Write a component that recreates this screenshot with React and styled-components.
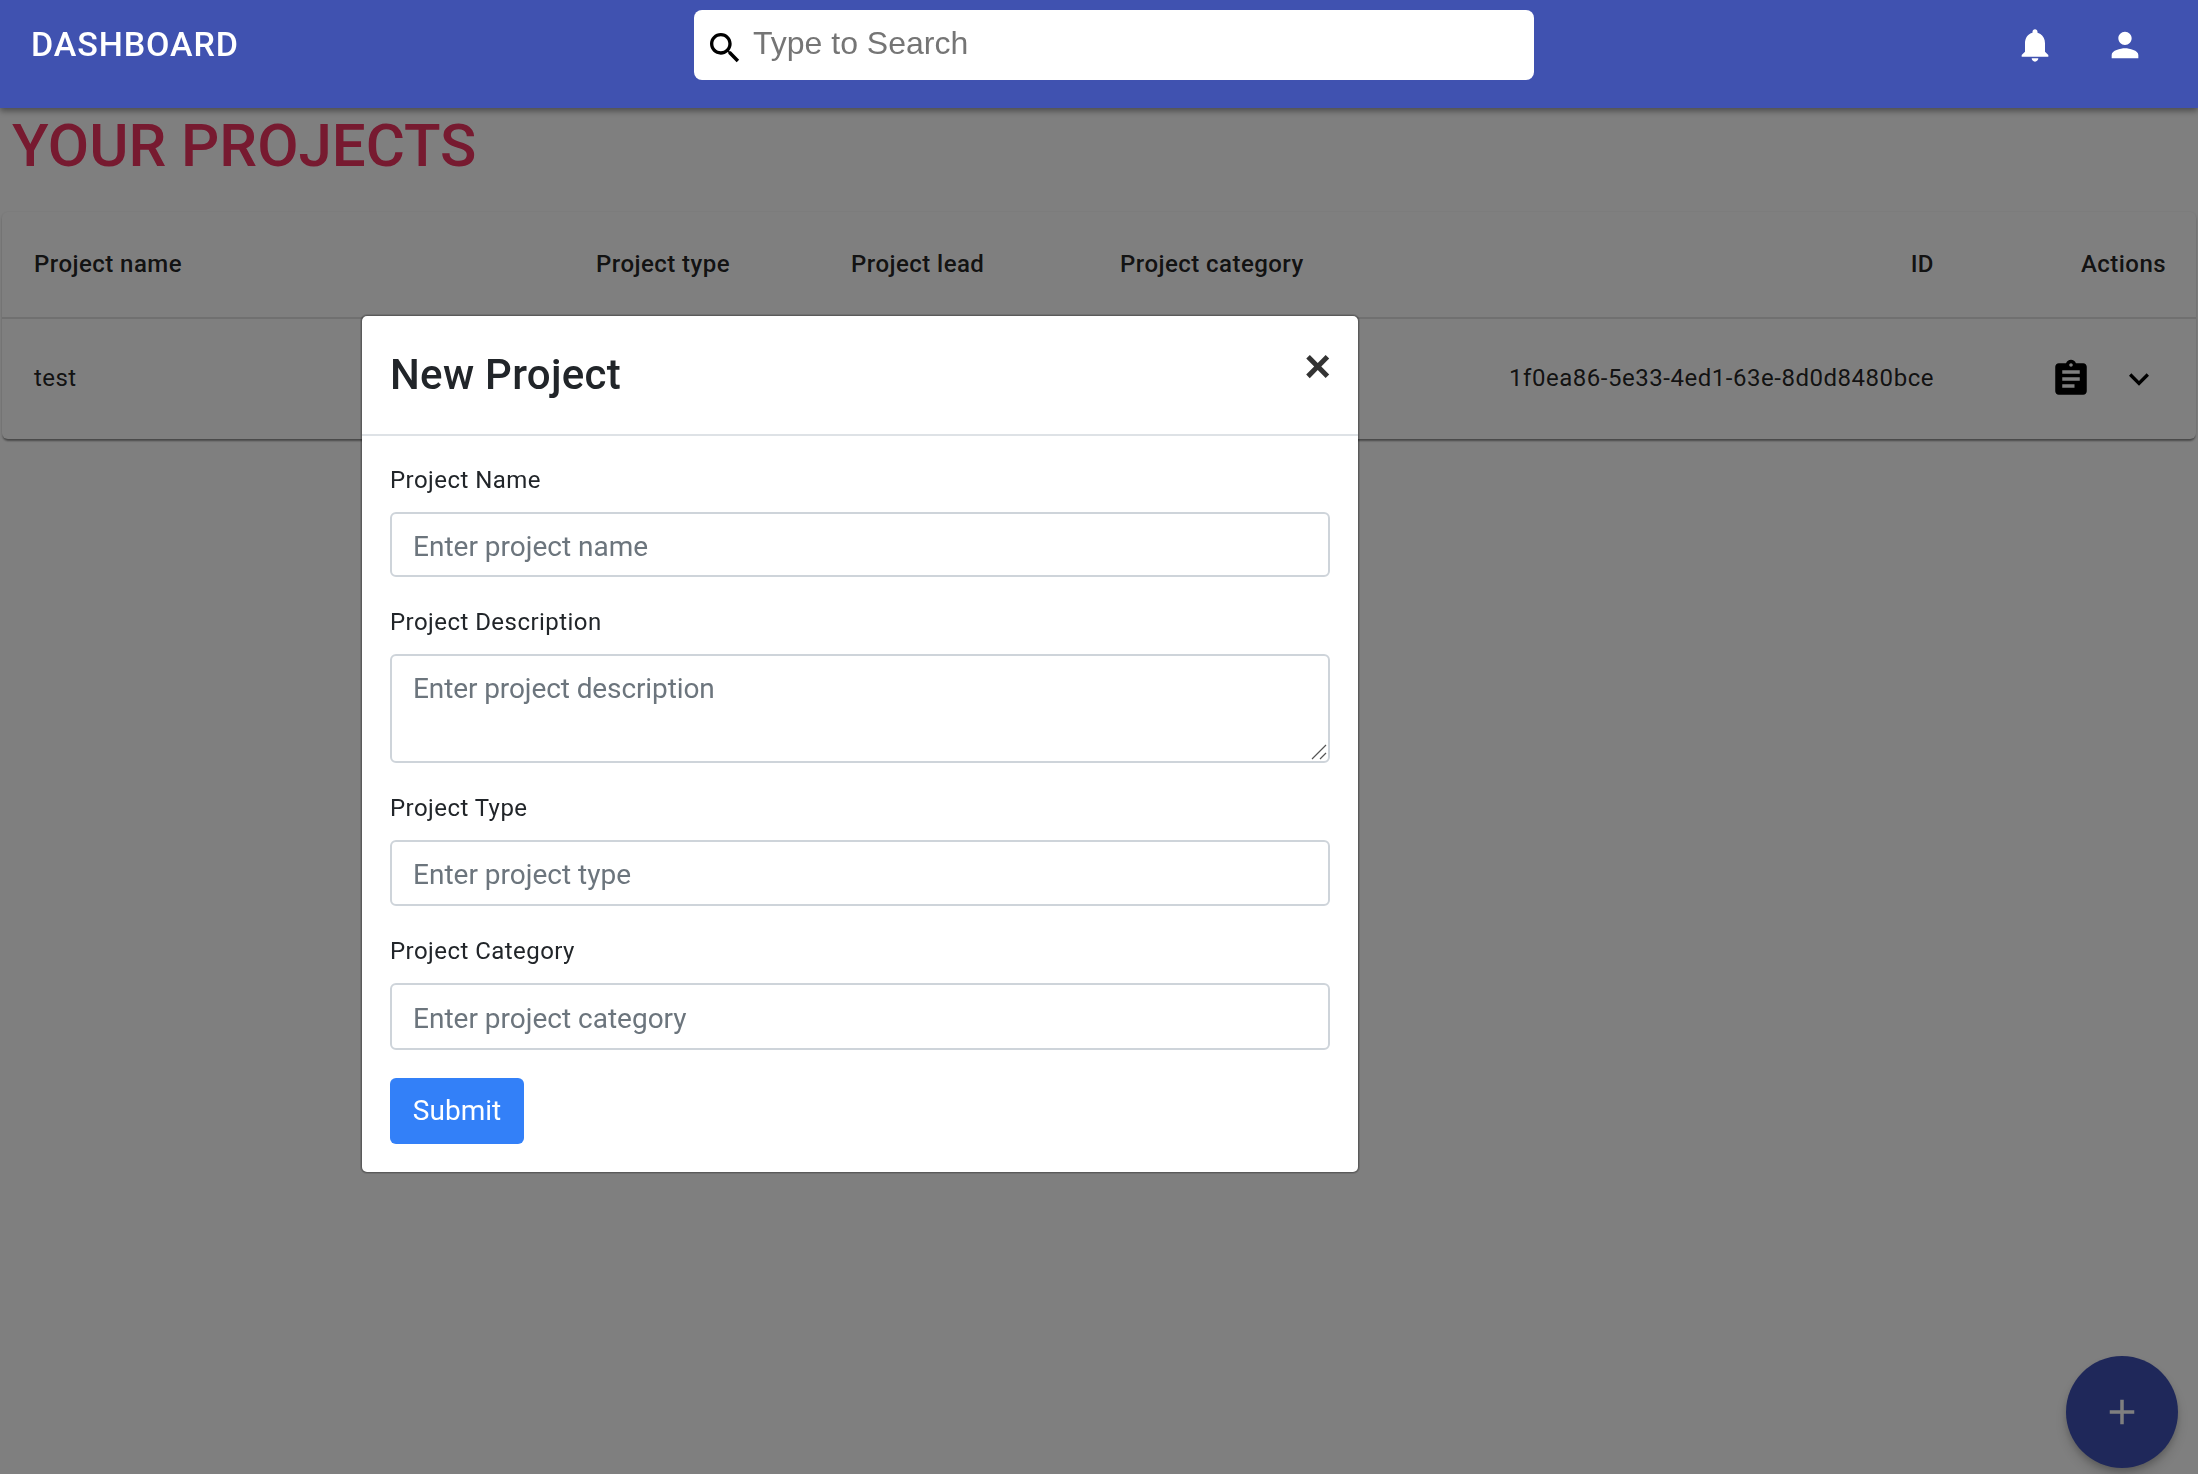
import React from "react";
import styled, { createGlobalStyle } from "styled-components";

const GlobalStyle = createGlobalStyle`
  html, body {
    margin: 0;
    height: 100%;
    overflow: hidden;
    background: #fff;
    font-family: Roboto, "Liberation Sans", sans-serif;
  }
  * {
    box-sizing: border-box;
  }
`;

const ICONS = {
  search:
    "M15.5 14h-.79l-.28-.27C15.41 12.59 16 11.11 16 9.5 16 5.91 13.09 3 9.5 3S3 5.91 3 9.5 5.91 16 9.5 16c1.61 0 3.09-.59 4.23-1.57l.27.28v.79l5 4.99L20.49 19l-4.99-5zm-6 0C7.01 14 5 11.99 5 9.5S7.01 5 9.5 5 14 7.01 14 9.5 11.99 14 9.5 14z",
  bell: "M12 22c1.1 0 2-.9 2-2h-4c0 1.1.89 2 2 2zm6-6v-5c0-3.07-1.64-5.64-4.5-6.32V4c0-.83-.67-1.5-1.5-1.5s-1.5.67-1.5 1.5v.68C7.63 5.36 6 7.92 6 11v5l-2 2v1h16v-1l-2-2z",
  person:
    "M12 12c2.21 0 4-1.79 4-4s-1.79-4-4-4-4 1.79-4 4 1.79 4 4 4zm0 2c-2.67 0-8 1.34-8 4v2h16v-2c0-2.66-5.33-4-8-4z",
  assignment:
    "M19 3h-4.18C14.4 1.84 13.3 1 12 1c-1.3 0-2.4.84-2.82 2H5c-1.1 0-2 .9-2 2v14c0 1.1.9 2 2 2h14c1.1 0 2-.9 2-2V5c0-1.1-.9-2-2-2zm-7 0c.55 0 1 .45 1 1s-.45 1-1 1-1-.45-1-1 .45-1 1-1zm2 14H7v-2h7v2zm3-4H7v-2h10v2zm0-4H7V7h10v2z",
  expand: "M16.59 8.59L12 13.17 7.41 8.59 6 10l6 6 6-6z",
  add: "M19 13h-6v6h-2v-6H5v-2h6V5h2v6h6v2z",
};

const Icon = ({ name, size, color }) => (
  <svg width={size} height={size} viewBox="0 0 24 24" fill={color}>
    <path d={ICONS[name]} />
  </svg>
);

const FIELDS = [
  { label: "Project Name", placeholder: "Enter project name", height: 65 },
  { label: "Project Description", placeholder: "Enter project description", height: 109, multiline: true },
  { label: "Project Type", placeholder: "Enter project type", height: 66 },
  { label: "Project Category", placeholder: "Enter project category", height: 67 },
];

const App = () => {
  return (
    <>
      <GlobalStyle />
      <TopBar>
        <Brand>DASHBOARD</Brand>
        <SearchBox>
          <SearchIcon>
            <Icon name="search" size={40} color="#000" />
          </SearchIcon>
          <SearchInput placeholder="Type to Search" />
        </SearchBox>
        <TopIcons>
          <Icon name="bell" size={40} color="#fff" />
          <Icon name="person" size={40} color="#fff" />
        </TopIcons>
      </TopBar>

      <PageTitle>YOUR PROJECTS</PageTitle>

      <Card>
        <HeadRow>
          <span>Project name</span>
          <span>Project type</span>
          <span>Project lead</span>
          <span>Project category</span>
          <EndCell>ID</EndCell>
          <EndCell>Actions</EndCell>
        </HeadRow>
        <BodyRow>
          <span>test</span>
          <span />
          <span />
          <span />
          <IdCell>1f0ea86-5e33-4ed1-63e-8d0d8480bce</IdCell>
          <ActionsCell>
            <Icon name="assignment" size={42} color="#000" />
            <Icon name="expand" size={40} color="#000" />
          </ActionsCell>
        </BodyRow>
      </Card>

      <Fab>
        <Icon name="add" size={42} color="#fff" />
      </Fab>

      <Backdrop>
        <Modal>
          <ModalHeader>
            <ModalTitle>New Project</ModalTitle>
            <CloseButton>×</CloseButton>
          </ModalHeader>
          <ModalForm onSubmit={(ev) => ev.preventDefault()}>
            {FIELDS.map((field) => (
              <Group key={field.label}>
                <Label>{field.label}</Label>
                {field.multiline ? (
                  <TextAreaWrap>
                    <TextArea placeholder={field.placeholder} $height={field.height} />
                    <ResizeGrip width="16" height="16" viewBox="0 0 16 16">
                      <path d="M1 15L15 1M9 15L15 9" stroke="#555" strokeWidth="1.2" fill="none" />
                    </ResizeGrip>
                  </TextAreaWrap>
                ) : (
                  <TextInput placeholder={field.placeholder} $height={field.height} />
                )}
              </Group>
            ))}
            <SubmitButton type="submit">Submit</SubmitButton>
          </ModalForm>
        </Modal>
      </Backdrop>
    </>
  );
};

const TopBar = styled.header`
  position: relative;
  z-index: 20;
  height: 108px;
  background: #4052b0;
  box-shadow: 0 3px 6px rgba(0, 0, 0, 0.4);
  color: #fff;
  display: grid;
  grid-template-columns: 694px 840px 1fr;
  align-items: start;
`;
const Brand = styled.h1`
  margin: 0;
  padding: 27px 0 0 31px;
  font-size: 34px;
  line-height: 34px;
  letter-spacing: 0.9px;
  font-weight: 500;
`;
const SearchBox = styled.div`
  margin-top: 10px;
  height: 70px;
  background: #fff;
  border-radius: 8px;
  display: flex;
  align-items: center;
`;
const SearchIcon = styled.div`
  display: flex;
  margin: 6px 8px 0 11px;
`;
const SearchInput = styled.input`
  flex: 1;
  border: none;
  outline: none;
  padding: 0 0 3px;
  height: 44px;
  background: transparent;
  font-family: "Liberation Sans", Arial, sans-serif;
  font-size: 32px;
  color: #333;

  &::placeholder {
    color: #757575;
    opacity: 1;
  }
`;
const TopIcons = styled.div`
  display: flex;
  justify-content: flex-end;
  gap: 50px;
  padding: 25px 53px 0 0;
`;
const PageTitle = styled.h2`
  margin: 0;
  padding: 3px 0 0 12px;
  height: 104px;
  font-size: 60px;
  line-height: 70px;
  font-weight: 500;
  color: #ee3460;
`;
const Card = styled.section`
  margin: 0 2px;
  background: #fff;
  border-radius: 6px;
  box-shadow: 0 3px 2px -1px rgba(0, 0, 0, 0.35), 0 1px 3px 0 rgba(0, 0, 0, 0.2);
`;
const HeadRow = styled.div`
  display: grid;
  grid-template-columns: 562px 255px 269px 380px 1fr 232px;
  align-items: center;
  height: 107px;
  padding: 0 30px 2px 32px;
  border-bottom: 2px solid #e0e0e0;
  font-size: 24px;
  letter-spacing: 0.45px;
  font-weight: 500;
  color: rgba(0, 0, 0, 0.87);
  white-space: nowrap;
`;
const BodyRow = styled.div`
  display: grid;
  grid-template-columns: 562px 255px 269px 380px 1fr 232px;
  align-items: center;
  height: 120px;
  padding: 0 30px 2px 32px;
  font-size: 24px;
  letter-spacing: 0.45px;
  color: rgba(0, 0, 0, 0.87);
  white-space: nowrap;
`;
const EndCell = styled.span`
  text-align: right;
`;
const IdCell = styled(EndCell)`
  letter-spacing: 0.53px;
`;
const ActionsCell = styled.div`
  display: flex;
  justify-content: flex-end;
  align-items: center;
  gap: 27px;
  padding: 2px 7px 0 0;
`;
const Fab = styled.button`
  position: fixed;
  right: 20px;
  bottom: 6px;
  width: 112px;
  height: 112px;
  padding: 0;
  border: none;
  border-radius: 50%;
  background: #3f51b5;
  display: flex;
  align-items: center;
  justify-content: center;
  box-shadow: 0 4px 7px -1px rgba(0, 0, 0, 0.2), 0 8px 14px 0 rgba(0, 0, 0, 0.14);
`;
const Backdrop = styled.div`
  position: fixed;
  inset: 0;
  z-index: 10;
  background: rgba(0, 0, 0, 0.5);
  padding: 315px 0 0 361px;
`;
const Modal = styled.div`
  width: 998px;
  background: #fff;
  border: 1px solid rgba(0, 0, 0, 0.2);
  background-clip: padding-box;
  border-radius: 6px;
  box-shadow: 0 0 0 1px rgba(0, 0, 0, 0.12);
`;
const ModalHeader = styled.div`
  height: 120px;
  padding: 0 28px;
  border-bottom: 2px solid #dee2e6;
  display: flex;
  justify-content: space-between;
  align-items: center;
`;
const ModalTitle = styled.h3`
  margin: 0;
  font-size: 42px;
  line-height: 60px;
  letter-spacing: 0.3px;
  font-weight: 500;
  color: #212529;
`;
const CloseButton = styled.button`
  margin: -18px -1px 0 0;
  padding: 0;
  border: none;
  background: none;
  font-family: "Liberation Sans", Arial, sans-serif;
  font-size: 46px;
  line-height: 46px;
  font-weight: 700;
  color: #333;
`;
const ModalForm = styled.form`
  padding: 27px 28px 28px;
`;
const Group = styled.div`
  margin-bottom: 28px;
`;
const Label = styled.label`
  display: block;
  height: 49px;
  font-size: 24px;
  line-height: 34px;
  letter-spacing: 0.45px;
  color: #212529;
`;
const TextInput = styled.input`
  display: block;
  width: 100%;
  height: ${(p) => p.$height}px;
  padding: 3px 22px 0 21px;
  border: 2px solid #ced4da;
  border-radius: 6px;
  outline: none;
  font-family: Roboto, sans-serif;
  font-size: 28px;
  color: #495057;

  &::placeholder {
    color: #6c757d;
    opacity: 1;
  }
`;
const TextAreaWrap = styled.div`
  position: relative;
`;
const TextArea = styled.textarea`
  display: block;
  width: 100%;
  height: ${(p) => p.$height}px;
  padding: 12px 22px 8px 21px;
  border: 2px solid #ced4da;
  border-radius: 6px;
  outline: none;
  resize: none;
  font-family: Roboto, sans-serif;
  font-size: 28px;
  line-height: 42px;
  letter-spacing: -0.1px;
  color: #495057;

  &::placeholder {
    color: #6c757d;
    opacity: 1;
  }
`;
const ResizeGrip = styled.svg`
  position: absolute;
  right: 3px;
  bottom: 3px;
`;
const SubmitButton = styled.button`
  display: block;
  width: 134px;
  height: 66px;
  padding: 0 0 2px;
  border: none;
  border-radius: 6px;
  background: #3380f8;
  color: #fff;
  font-family: Roboto, sans-serif;
  font-size: 28px;
`;

export default App;
